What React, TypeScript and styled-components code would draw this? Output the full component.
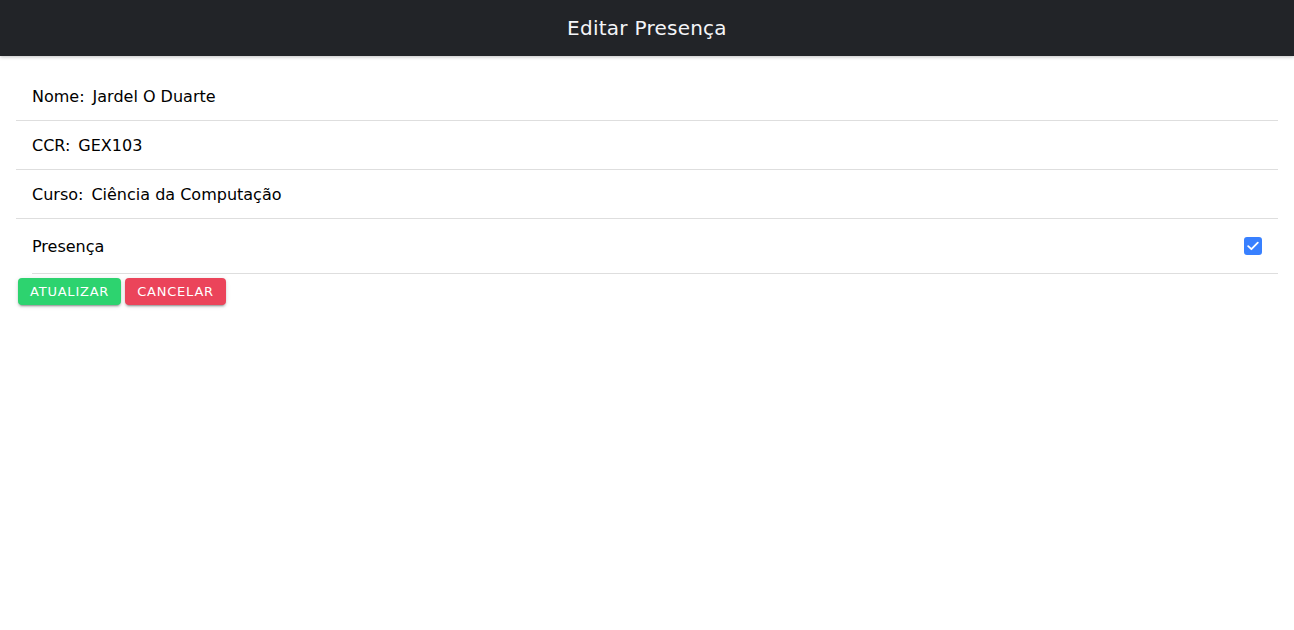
import React, { useState } from "react"
import styled, { createGlobalStyle } from "styled-components"

// ■■■■■■■■■■■■■■■■■■■■■■■■■■■■■■■■■■■■■■■■■■■■■■■■■■■■■■■■■■■■■■■■■■■■■■■■■■■■■

const GlobalStyle = createGlobalStyle`
	html, body {
		margin: 0;
		padding: 0;
		background: #ffffff;
		font-family: "DejaVu Sans", "Liberation Sans", sans-serif;
		color: #000000;
	}
`

export default function App() {
	const [presenca, setPresenca] = useState(true)

	return (
		<StyledPage>
			<GlobalStyle />
			<StyledHeader>
				<StyledTitle>Editar Presença</StyledTitle>
			</StyledHeader>

			<StyledContent>
				<StyledList>
					<StyledItem $full>
						<StyledLabel>Nome:</StyledLabel>
						<StyledValue>Jardel O Duarte</StyledValue>
					</StyledItem>
					<StyledItem $full>
						<StyledLabel>CCR:</StyledLabel>
						<StyledValue>GEX103</StyledValue>
					</StyledItem>
					<StyledItem $full>
						<StyledLabel>Curso:</StyledLabel>
						<StyledValue>Ciência da Computação</StyledValue>
					</StyledItem>
					<StyledItem $tall>
						<StyledLabel>Presença</StyledLabel>
						<StyledCheckbox
							$checked={presenca}
							onClick={() => setPresenca(!presenca)}
							role="checkbox"
							aria-checked={presenca}
						>
							{presenca && (
								<svg width="12" height="10" viewBox="0 0 12 10">
									<path d="M1.2 5.2 L4.4 8.2 L10.8 1.6" fill="none" stroke="#fff" strokeWidth="1.8" strokeLinecap="round" strokeLinejoin="round" />
								</svg>
							)}
						</StyledCheckbox>
					</StyledItem>
				</StyledList>

				<StyledButtons>
					<StyledButton $color="#2dd36f">Atualizar</StyledButton>
					<StyledButton $color="#eb445a">Cancelar</StyledButton>
				</StyledButtons>
			</StyledContent>
		</StyledPage>
	)
}

// 〓〓〓〓〓〓〓〓〓〓〓〓〓〓〓〓〓〓〓〓〓〓〓〓〓〓〓〓〓〓	STYLED_COMPONENTS

const StyledPage = styled.div`
	width: 100%;
	min-height: 630px;
	background: #ffffff;
`

const StyledHeader = styled.header`
	height: 56px;
	background: #222428;
	display: flex;
	align-items: center;
	justify-content: center;
	box-shadow: 0 1px 3px rgba(0, 0, 0, 0.18), 0 2px 4px rgba(0, 0, 0, 0.06);
	position: relative;
	z-index: 1;
`

const StyledTitle = styled.h1`
	margin: 0;
	font-size: 20px;
	font-weight: 500;
	color: #f4f5f8;
	letter-spacing: 0.0125em;
`

const StyledContent = styled.main`
	padding: 16px;
`

const StyledList = styled.div`
	display: flex;
	flex-direction: column;
`

const StyledItem = styled.div<{ $full?: boolean; $tall?: boolean }>`
	display: flex;
	align-items: center;
	min-height: ${(p) => (p.$tall ? "54px" : "48px")};
	padding: 0 16px 0 16px;
	margin-left: ${(p) => (p.$full ? "0" : "16px")};
	padding-left: ${(p) => (p.$full ? "16px" : "0")};
	border-bottom: 1px solid #dedede;
	font-size: 16px;
`

const StyledLabel = styled.span`
	color: #000000;
`

const StyledValue = styled.span`
	margin-left: 8px;
	color: #000000;
`

const StyledCheckbox = styled.div<{ $checked: boolean }>`
	margin-left: auto;
	width: 18px;
	height: 18px;
	border-radius: 3px;
	box-sizing: border-box;
	background: ${(p) => (p.$checked ? "#3880ff" : "transparent")};
	border: 2px solid ${(p) => (p.$checked ? "#3880ff" : "#777")};
	display: flex;
	align-items: center;
	justify-content: center;
	cursor: pointer;
`

const StyledButtons = styled.div`
	display: flex;
	margin-top: 4px;
`

const StyledButton = styled.button<{ $color: string }>`
	margin: 0 2px;
	height: 27px;
	padding: 0 12px;
	border: none;
	border-radius: 4px;
	background: ${(p) => p.$color};
	color: #ffffff;
	font-family: "DejaVu Sans", "Liberation Sans", sans-serif;
	font-size: 13px;
	font-weight: 500;
	letter-spacing: 0.06em;
	text-transform: uppercase;
	box-shadow: 0 3px 1px -2px rgba(0, 0, 0, 0.2), 0 2px 2px 0 rgba(0, 0, 0, 0.14), 0 1px 5px 0 rgba(0, 0, 0, 0.12);
	cursor: pointer;
`
